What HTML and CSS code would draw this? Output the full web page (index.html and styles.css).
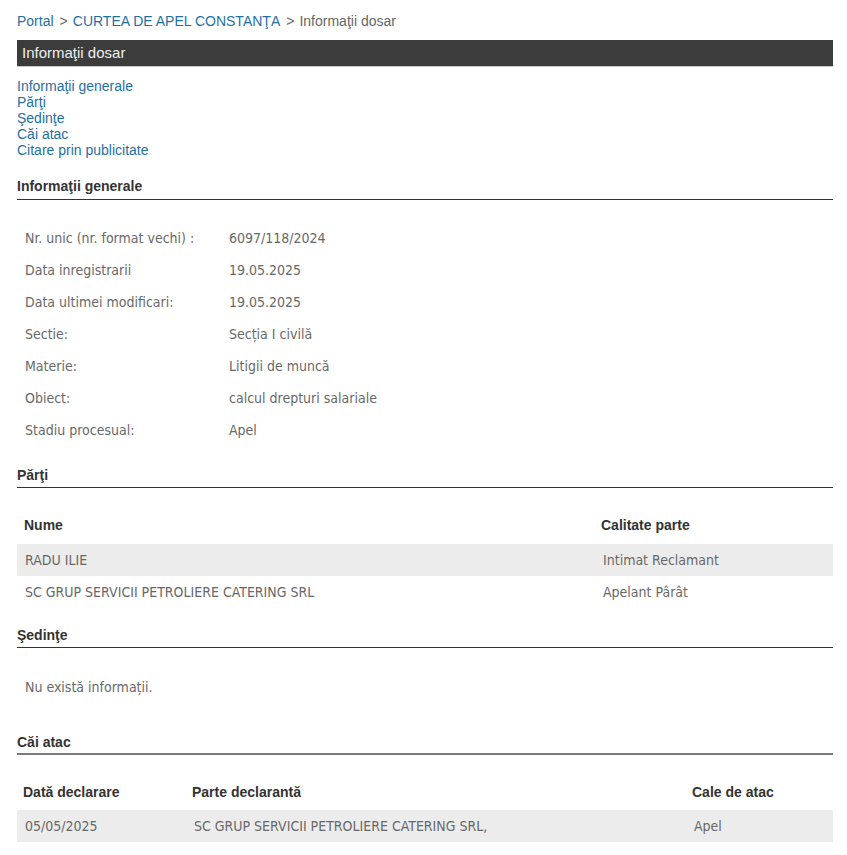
FILE: index.html
```html
<!DOCTYPE html>
<html lang="ro">
<head>
<meta charset="utf-8">
<title>Informaţii dosar</title>
<link rel="stylesheet" href="styles.css">
</head>
<body>
<div class="page">
  <div class="crumbs">
    <a href="#">Portal</a><span class="sep">&gt;</span><a href="#">CURTEA DE APEL CONSTANŢA</a><span class="sep">&gt;</span><span class="cur">Informaţii dosar</span>
  </div>
  <div class="bar">Informaţii dosar</div>
  <ul class="toc">
    <li><a href="#">Informaţii generale</a></li>
    <li><a href="#">Părţi</a></li>
    <li><a href="#">Şedinţe</a></li>
    <li><a href="#">Căi atac</a></li>
    <li><a href="#">Citare prin publicitate</a></li>
  </ul>

  <h2 class="sec sec-first">Informaţii generale</h2>
  <div class="info">
    <div class="row"><span class="lbl">Nr. unic (nr. format vechi) :</span><span class="val">6097/118/2024</span></div>
    <div class="row"><span class="lbl">Data inregistrarii</span><span class="val">19.05.2025</span></div>
    <div class="row"><span class="lbl">Data ultimei modificari:</span><span class="val">19.05.2025</span></div>
    <div class="row"><span class="lbl">Sectie:</span><span class="val">Secția I civilă</span></div>
    <div class="row"><span class="lbl">Materie:</span><span class="val">Litigii de muncă</span></div>
    <div class="row"><span class="lbl">Obiect:</span><span class="val">calcul drepturi salariale</span></div>
    <div class="row"><span class="lbl">Stadiu procesual:</span><span class="val">Apel</span></div>
  </div>

  <h2 class="sec sec-parti">Părţi</h2>
  <div class="tbl parti">
    <div class="th"><span class="c1">Nume</span><span class="c2">Calitate parte</span></div>
    <div class="tr alt"><span class="c1">RADU ILIE</span><span class="c2">Intimat Reclamant</span></div>
    <div class="tr"><span class="c1">SC GRUP SERVICII PETROLIERE CATERING SRL</span><span class="c2">Apelant Pârât</span></div>
  </div>

  <h2 class="sec sec-sed">Şedinţe</h2>
  <p class="empty">Nu există informații.</p>

  <h2 class="sec sec-cai">Căi atac</h2>
  <div class="tbl cai">
    <div class="th"><span class="d1">Dată declarare</span><span class="d2">Parte declarantă</span><span class="d3">Cale de atac</span></div>
    <div class="tr alt"><span class="d1">05/05/2025</span><span class="d2">SC GRUP SERVICII PETROLIERE CATERING SRL,</span><span class="d3">Apel</span></div>
  </div>
</div>
</body>
</html>
```

FILE: styles.css
```css
html, body {
  margin: 0;
  padding: 0;
  background: #fff;
}
* { box-sizing: border-box; }
body {
  font-family: "Liberation Sans", Arial, sans-serif;
  font-size: 14px;
  color: #333;
}
.page {
  width: 816px;
  margin-left: 17px;
  padding-top: 13px;
}
a {
  color: #1f6fa5;
  text-decoration: none;
}
.crumbs {
  font-size: 14px;
  line-height: 16px;
  height: 16px;
}
.crumbs .sep {
  color: #666;
  margin: 0 5px 0 6px;
}
.crumbs .cur {
  color: #666;
}
.bar {
  margin-top: 11px;
  height: 27px;
  line-height: 26px;
  background: #3c3c3c;
  color: #eeeeee;
  font-size: 15px;
  padding-left: 5px;
  border-bottom: 1px solid #c8c8c8;
}
.toc {
  list-style: none;
  margin: 11px 0 0 0;
  padding: 0;
  font-size: 14px;
  line-height: 16px;
}
.sec {
  margin: 0;
  font-size: 14px;
  font-weight: bold;
  color: #333;
  line-height: 16px;
  padding-bottom: 5px;
  border-bottom: 1px solid #333;
}
.sec-first { margin-top: 20px; }
.info {
  padding: 22px 0 0 8px;
  font-family: "DejaVu Sans Condensed", "DejaVu Sans", sans-serif;
  font-size: 14px;
  color: #686868;
}
.info .row {
  display: flex;
  height: 32px;
  line-height: 32px;
}
.info .lbl { width: 204px; flex: none; }
.sec-parti { margin-top: 21px; padding-bottom: 4px; }
.tbl {
  font-family: "DejaVu Sans Condensed", "DejaVu Sans", sans-serif;
  font-size: 14px;
  color: #686868;
}
.tbl .th, .tbl .tr {
  display: flex;
  height: 32px;
  line-height: 32px;
}
.tbl .th {
  font-family: "Liberation Sans", Arial, sans-serif;
  font-weight: bold;
  color: #333;
  font-size: 14px;
}
.tbl span { flex: none; }
.tbl .alt { background: #ececec; }
.parti { margin-top: 21px; }
.parti .th { height: 35px; padding-bottom: 3px; }
.parti .c1 { width: 577px; padding-left: 8px; }
.parti .th .c1 { padding-left: 7px; }
.parti .th .c2 { padding-left: 7px; }
.parti .tr .c2 { padding-left: 9px; }
.sec-sed { margin-top: 19px; padding-bottom: 4px; }
.empty {
  margin: 0;
  padding: 23px 0 0 8px;
  font-family: "DejaVu Sans Condensed", "DejaVu Sans", sans-serif;
  font-size: 14px;
  color: #686868;
  line-height: 32px;
}
.sec-cai { margin-top: 31px; border-bottom: 2px solid #7a7a7a; padding-bottom: 3px; }
.cai { margin-top: 21px; }
.cai .th { height: 34px; padding-bottom: 2px; }
.cai .d1 { width: 169px; }
.cai .d2 { width: 500px; }
.cai .th span { padding-left: 6px; }
.cai .tr span { padding-left: 8px; }
```
